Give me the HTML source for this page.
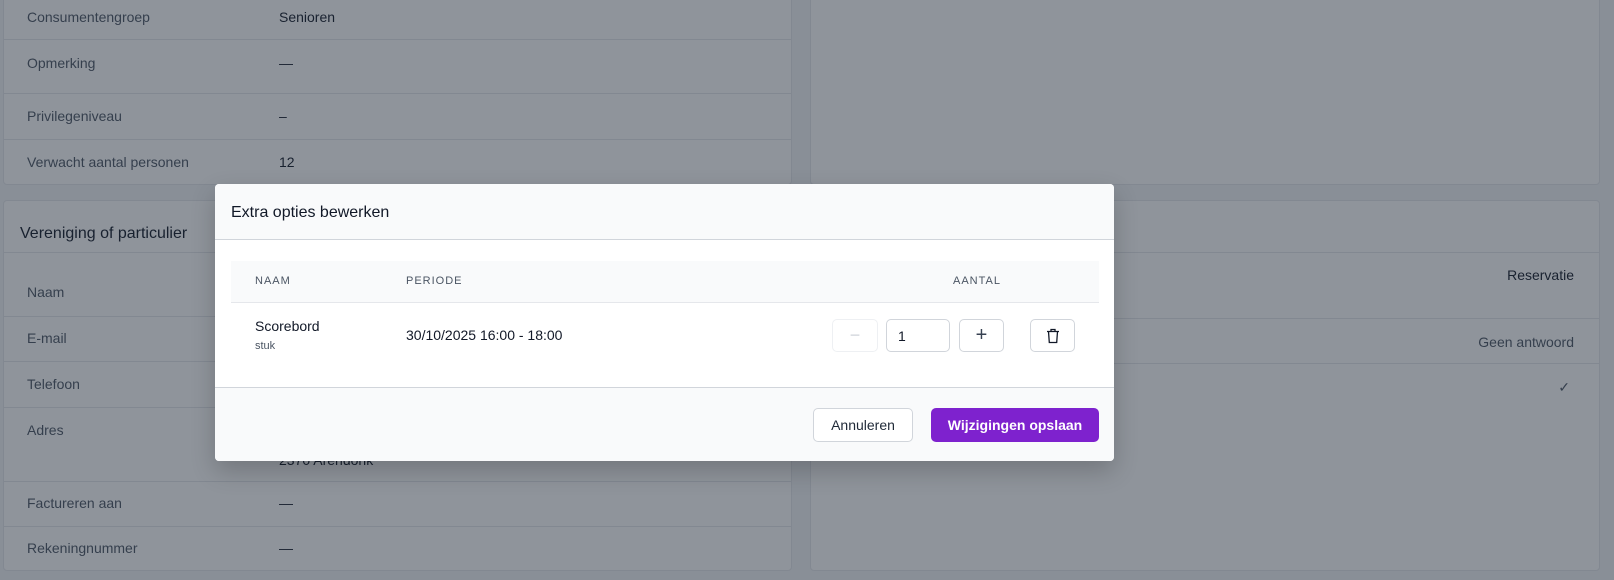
<!DOCTYPE html><html><head><meta charset="utf-8"><style>
*{box-sizing:border-box;margin:0;padding:0}
body{width:1614px;height:580px;overflow:hidden;background:#f3f4f6;font-family:"Liberation Sans",sans-serif;position:relative;color:#111827}
.card{position:absolute;background:#fff;border:1px solid #e5e7eb;border-radius:4px}
.t{position:absolute;font-size:14px;white-space:nowrap}
.l{color:#4b5563}
.line{position:absolute;height:1px;background:#e5e7eb}
.ov{position:absolute;inset:0;background:rgba(31,41,55,.5)}
.modal{position:absolute;left:215px;top:184px;width:899px;height:277px;background:#fff;border-radius:4px;box-shadow:0 10px 25px rgba(0,0,0,.2);overflow:hidden}
.btn{position:absolute;border:1px solid #d1d5db;border-radius:5px;background:#fff;display:flex;align-items:center;justify-content:center}
</style></head><body>
<div class="card" style="left:3px;top:-5px;width:789px;height:190px"></div>
<div class="card" style="left:810px;top:-5px;width:790px;height:190px"></div>
<div class="card" style="left:3px;top:200px;width:789px;height:371px"></div>
<div class="card" style="left:810px;top:200px;width:790px;height:371px"></div>
<div class="t l" style="left:27px;top:9px">Consumentengroep</div><div class="t" style="left:279px;top:9px">Senioren</div>
<div class="line" style="left:4px;width:787px;top:39px"></div>
<div class="t l" style="left:27px;top:55px">Opmerking</div><div class="t" style="left:279px;top:55px">—</div>
<div class="line" style="left:4px;width:787px;top:93px"></div>
<div class="t l" style="left:27px;top:108px">Privilegeniveau</div><div class="t" style="left:279px;top:108px">–</div>
<div class="line" style="left:4px;width:787px;top:139px"></div>
<div class="t l" style="left:27px;top:154px">Verwacht aantal personen</div><div class="t" style="left:279px;top:154px">12</div>
<div class="t" style="left:20px;top:225px;font-size:16px">Vereniging of particulier</div>
<div class="line" style="left:4px;width:787px;top:252px"></div>
<div class="line" style="left:811px;width:788px;top:252px"></div>
<div class="t l" style="left:27px;top:284px">Naam</div>
<div class="line" style="left:4px;width:787px;top:316px"></div>
<div class="t l" style="left:27px;top:330px">E-mail</div>
<div class="line" style="left:4px;width:787px;top:361px"></div>
<div class="t l" style="left:27px;top:376px">Telefoon</div>
<div class="line" style="left:4px;width:787px;top:407px"></div>
<div class="t l" style="left:27px;top:422px">Adres</div>
<div class="t" style="left:279px;top:452px">2370 Arendonk</div>
<div class="line" style="left:4px;width:787px;top:481px"></div>
<div class="t l" style="left:27px;top:495px">Factureren aan</div><div class="t" style="left:279px;top:495px">—</div>
<div class="line" style="left:4px;width:787px;top:526px"></div>
<div class="t l" style="left:27px;top:540px">Rekeningnummer</div><div class="t" style="left:279px;top:540px">—</div>
<div class="t" style="right:40px;top:267px">Reservatie</div>
<div class="line" style="left:811px;width:788px;top:318px"></div>
<div class="t l" style="right:40px;top:334px">Geen antwoord</div>
<div class="line" style="left:811px;width:788px;top:363px"></div>
<div class="t l" style="right:44px;top:379px">✓</div>
<div class="ov"></div>
<div class="modal">
<div style="position:absolute;left:0;top:0;width:899px;height:56px;background:#f9fafb;border-bottom:1px solid #d1d5db"></div>
<div class="t" style="left:16px;top:20px;font-size:16px">Extra opties bewerken</div>
<div style="position:absolute;left:16px;top:77px;width:868px;height:42px;background:#f9fafb;border-bottom:1px solid #e5e7eb"></div>
<div class="t" style="left:40px;top:91px;font-size:11px;letter-spacing:1px;color:#4b5563">NAAM</div>
<div class="t" style="left:191px;top:91px;font-size:11px;letter-spacing:1px;color:#4b5563">PERIODE</div>
<div class="t" style="left:738px;top:91px;font-size:11px;letter-spacing:1px;color:#4b5563">AANTAL</div>
<div class="t" style="left:40px;top:134px">Scorebord</div>
<div class="t" style="left:40px;top:156px;font-size:11px;color:#4b5563">stuk</div>
<div class="t" style="left:191px;top:143px">30/10/2025 16:00 - 18:00</div>
<div class="btn" style="left:617px;top:135px;width:46px;height:33px;border-color:#eef0f3;color:#d1d5db;font-size:18px">−</div>
<div class="btn" style="left:671px;top:135px;width:64px;height:33px;justify-content:flex-start;padding-left:11px;font-size:14px">1</div>
<div class="btn" style="left:744px;top:135px;width:45px;height:33px;font-size:20px;color:#374151">+</div>
<div class="btn" style="left:815px;top:135px;width:45px;height:33px"><svg width="14" height="16" viewBox="0 0 14 16" fill="none" stroke="#111827" stroke-width="1.3"><path d="M1 3.5h12M5 3.5V1.5h4v2M2.5 3.5l.8 11h7.4l.8-11"/></svg></div>
<div style="position:absolute;left:0;top:203px;width:899px;height:74px;background:#f9fafb;border-top:1px solid #d1d5db"></div>
<div class="btn" style="left:598px;top:224px;width:100px;height:34px;font-size:14px;color:#1f2937">Annuleren</div>
<div class="btn" style="left:716px;top:224px;width:168px;height:34px;background:#7e22ce;border-color:#7e22ce;color:#fff;font-weight:bold;font-size:14px">Wijzigingen opslaan</div>
</div>
</body></html>
